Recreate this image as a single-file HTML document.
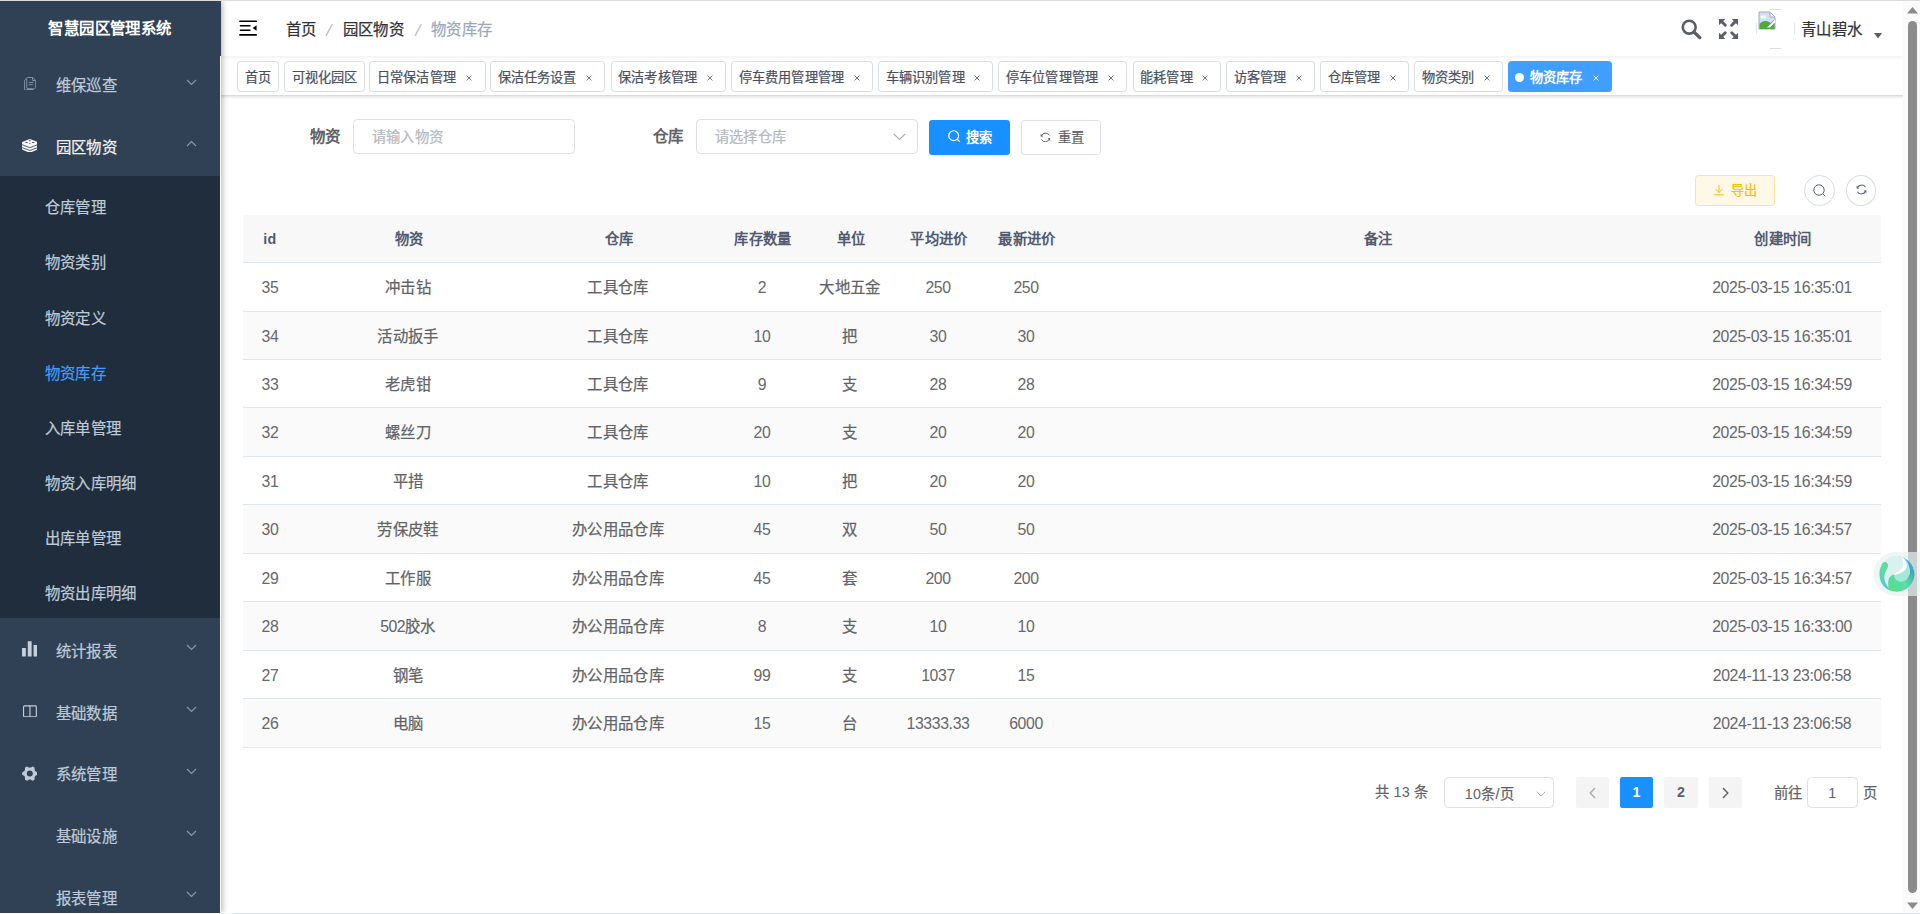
<!DOCTYPE html>
<html lang="zh-CN"><head><meta charset="utf-8"><title>物资库存</title>
<style>
*{box-sizing:border-box;margin:0;padding:0}
html,body{width:1920px;height:914px;overflow:hidden;background:#fff}
body{position:relative;font-family:"Liberation Sans",sans-serif;color:#303133;-webkit-font-smoothing:auto;-webkit-text-stroke:.22px}
.abs{position:absolute}
#topline{position:absolute;left:0;top:0;width:1920px;height:1px;background:#dcdcdc;z-index:50}
#botline{position:absolute;left:0;top:913px;width:1920px;height:1px;background:linear-gradient(90deg,#f2fafb 0,#f2fafb 228px,#d3e7ef 236px,#d3e7ef 100%);z-index:50}
#sidebar{position:absolute;left:0;top:1px;width:220px;height:912px;background:#304156;z-index:20;box-shadow:2px 0 6px rgba(0,21,41,.35);overflow:visible}
#subbg{position:absolute;left:0;top:175px;width:220px;height:442px;background:#1f2d3d}
#title{letter-spacing:.4px;position:absolute;left:0;top:0;width:220px;height:55px;line-height:55px;text-align:center;color:#fff;font-weight:bold;font-size:15.4px;background:#304156}
.mi{letter-spacing:.4px;position:absolute;left:0;width:220px;height:61.6px;line-height:61.6px;color:#bfcbd9;font-size:15.4px;white-space:nowrap}
.mi span{position:absolute;left:55.5px;top:2.7px}
.mi svg.ic{position:absolute;left:22px;}
.mi svg.ar{position:absolute;left:186px;top:26px}
.si{letter-spacing:.4px;position:absolute;left:0;width:220px;height:55px;line-height:55px;color:#bfcbd9;font-size:15.4px;white-space:nowrap}
.si span{position:absolute;left:44.5px;top:1.8px}
#navbar{position:absolute;left:220px;top:1px;width:1684px;height:55px;background:#fff;box-shadow:0 1px 4px rgba(0,21,41,.08);z-index:10}
#tags{position:absolute;left:220px;top:56px;width:1684px;height:39.5px;background:#fff;border-bottom:1px solid #d8dce5;box-shadow:0 1px 3px 0 rgba(0,0,0,.12),0 0 3px 0 rgba(0,0,0,.04);z-index:9}
.tag{letter-spacing:.2px;position:absolute;top:5px;height:30.5px;line-height:32.5px;border:1px solid #d8dce5;border-radius:3.3px;background:#fff;color:#495060;font-size:13.2px;padding:0 6.5px;white-space:nowrap}
.tag svg{position:absolute;right:12.2px;top:13.1px}
.tag.on{background:#409eff;border-color:#409eff;color:#fff;font-weight:bold}
.tag.on:before{content:"";display:inline-block;width:9px;height:9px;border-radius:50%;background:#fff;margin-right:6px;margin-left:-1px;position:relative;top:-0.3px}
.bc{letter-spacing:.4px;position:absolute;top:0;height:55px;line-height:57px;font-size:15.4px;color:#303133;white-space:nowrap}
.lbl{letter-spacing:.4px;position:absolute;font-size:15.4px;font-weight:bold;color:#606266;line-height:35px;height:35px;white-space:nowrap}
.inp{letter-spacing:.3px;position:absolute;top:119px;height:35px;border:1px solid #dcdfe6;border-radius:4.4px;background:#fff;font-size:14.3px;color:#b4b8c0;line-height:34px;padding-left:17.5px;white-space:nowrap}
.btn{letter-spacing:.2px;position:absolute;border-radius:3.3px;font-size:13.2px;white-space:nowrap}
.th{letter-spacing:.3px;position:absolute;top:0;height:47px;line-height:48px;font-size:14.3px;font-weight:bold;color:#515a6e;white-space:nowrap;transform:translateX(-50%)}
.tr{position:absolute;left:243px;width:1638px;border-bottom:1px solid #dfe6ec}
.td{position:absolute;top:0;font-size:15.4px;color:#606266;white-space:nowrap;transform:translateX(-50%);letter-spacing:.4px}
.td.n{color:#66686c;letter-spacing:-.37px;font-size:15.8px;top:.9px;-webkit-text-stroke:0}
.td b{font-weight:normal;letter-spacing:-.5px;font-size:15.8px;-webkit-text-stroke:0}
.td.c{top:.9px}
.pg{letter-spacing:.3px;position:absolute;top:777px;height:31px;line-height:31px;font-size:14.3px;color:#606266;white-space:nowrap}
#title,.lbl,.th,.tag.on,.pb,.nb,.pg i{-webkit-text-stroke:0;font-style:normal}
.pb{position:absolute;top:777px;height:31px;width:33px;border-radius:2.2px;background:#f4f4f5;text-align:center;line-height:31px;font-size:14.3px;font-weight:bold;color:#606266}
</style></head>
<body>
<div id="topline"></div><div id="botline"></div>
<div id="sidebar">
<div id="subbg"></div>
<div class="mi" style="top:51.8px;"><svg class="ic" style="top:24.1px;left:23.8px" width="12.2" height="13.4" viewBox="0 0 12.2 13.4"><path d="M3.3 .5 H8.7 L11.7 3.4 V10.6 L9.2 12.9 H1.2 Q.45 12.9 .45 12.1 V3.3 Z M2.7 2 V11.2 M8.6 .6 V3.5 H11.6 M4.8 5.6 H9.3 M4.8 7.7 H9.3" fill="none" stroke="#8a97ab" stroke-width=".9"/><path d="M3 11.2 H9.6 L8.9 12.9 H3z" fill="#8a97ab"/></svg><span>维保巡查</span><svg class="ar" width="11" height="7" viewBox="0 0 11 7"><path d="M1 1 L5.5 5.5 L10 1" fill="none" stroke="#8a96a8" stroke-width="1.2"/></svg></div>
<div class="mi" style="top:113.4px;color:#f4f4f5;"><svg class="ic" style="top:24.3px;left:21.8px" width="15.6" height="13.8" viewBox="0 0 15.6 13.8"><path d="M.3 2.9 L7 .3 Q7.8 0 8.6 .3 L15.3 2.9 Q15.6 3.1 15.6 3.6 V10 Q15.6 10.5 15.2 10.7 L8.6 13.5 Q7.8 13.8 7 13.5 L.4 10.7 Q0 10.5 0 10 V3.6 Q0 3.1 .3 2.9Z" fill="#f6f7f9"/><path d="M-.2 5.6 L7.8 8.7 L15.8 5.6 M-.2 8.5 L7.8 11.5 L15.8 8.5" stroke="#304156" stroke-width=".85" fill="none"/><ellipse cx="4.5" cy="3.5" rx="1.35" ry=".6" fill="#304156"/><ellipse cx="11.1" cy="3.5" rx="1.35" ry=".6" fill="#304156"/><ellipse cx="7.9" cy="1.7" rx="1" ry=".5" fill="#304156"/><ellipse cx="7.7" cy="4.7" rx="1" ry=".42" fill="#304156"/></svg><span>园区物资</span><svg class="ar" width="11" height="7" viewBox="0 0 11 7"><path d="M1 6 L5.5 1.5 L10 6" fill="none" stroke="#8a96a8" stroke-width="1.2"/></svg></div>
<div class="si" style="top:177.6px;"><span>仓库管理</span></div>
<div class="si" style="top:232.7px;"><span>物资类别</span></div>
<div class="si" style="top:287.8px;"><span>物资定义</span></div>
<div class="si" style="top:342.9px;color:#409eff;"><span>物资库存</span></div>
<div class="si" style="top:398.0px;"><span>入库单管理</span></div>
<div class="si" style="top:453.1px;"><span>物资入库明细</span></div>
<div class="si" style="top:508.2px;"><span>出库单管理</span></div>
<div class="si" style="top:563.3px;"><span>物资出库明细</span></div>
<div class="mi" style="top:617px;"><svg class="ic" style="top:22.8px;left:22px" width="15.4" height="15.8" viewBox="0 0 16 16"><path d="M0 7 h4 v9 h-4z M6 0 h4 v16 h-4z M12 4 h4 v12 h-4z" fill="#c6cfdb"/></svg><span>统计报表</span><svg class="ar" width="11" height="7" viewBox="0 0 11 7"><path d="M1 1 L5.5 5.5 L10 1" fill="none" stroke="#8a96a8" stroke-width="1.2"/></svg></div>
<div class="mi" style="top:678.85px;"><svg class="ic" style="top:24.8px;left:22.8px" width="13.9" height="12.6" viewBox="0 0 15 13"><rect x=".6" y=".6" width="13.8" height="11.8" rx="1" fill="none" stroke="#c6cfdb" stroke-width="1.2"/><path d="M7.5 .6 V12.4" stroke="#c6cfdb" stroke-width="1.2"/></svg><span>基础数据</span><svg class="ar" width="11" height="7" viewBox="0 0 11 7"><path d="M1 1 L5.5 5.5 L10 1" fill="none" stroke="#8a96a8" stroke-width="1.2"/></svg></div>
<div class="mi" style="top:740.7px;"><svg class="ic" style="top:24.2px;left:21.8px" width="15.6" height="15.2" viewBox="0 0 15.6 15.2"><path d="M15.5 7.6 L15.5 8.1 L15.4 8.6 L15.0 9.0 L14.4 9.4 L13.8 9.6 L13.3 9.9 L13.2 10.3 L13.0 10.6 L12.8 10.9 L12.6 11.3 L12.6 11.8 L12.6 12.4 L12.6 13.1 L12.5 13.7 L12.1 14.0 L11.7 14.3 L11.2 14.5 L10.7 14.7 L10.2 14.5 L9.6 14.2 L9.0 13.8 L8.6 13.5 L8.2 13.6 L7.8 13.6 L7.4 13.6 L7.0 13.5 L6.6 13.8 L6.0 14.2 L5.4 14.5 L4.9 14.7 L4.4 14.5 L4.0 14.3 L3.5 14.0 L3.1 13.7 L3.0 13.1 L3.0 12.4 L3.0 11.8 L3.0 11.3 L2.8 10.9 L2.6 10.6 L2.4 10.3 L2.3 9.9 L1.8 9.6 L1.2 9.4 L0.6 9.0 L0.2 8.6 L0.1 8.1 L0.1 7.6 L0.1 7.1 L0.2 6.6 L0.6 6.2 L1.2 5.8 L1.8 5.6 L2.3 5.3 L2.4 4.9 L2.6 4.6 L2.8 4.3 L3.0 3.9 L3.0 3.4 L3.0 2.8 L3.0 2.1 L3.1 1.5 L3.5 1.2 L3.9 0.9 L4.4 0.7 L4.9 0.5 L5.4 0.7 L6.0 1.0 L6.6 1.4 L7.0 1.7 L7.4 1.6 L7.8 1.6 L8.2 1.6 L8.6 1.7 L9.0 1.4 L9.6 1.0 L10.2 0.7 L10.7 0.5 L11.2 0.7 L11.7 0.9 L12.1 1.2 L12.5 1.5 L12.6 2.1 L12.6 2.8 L12.6 3.4 L12.6 3.9 L12.8 4.3 L13.0 4.6 L13.2 4.9 L13.3 5.3 L13.8 5.6 L14.4 5.8 L15.0 6.2 L15.4 6.6 L15.5 7.1Z M7.8 4.6 A3 3 0 1 0 7.8 10.6 A3 3 0 1 0 7.8 4.6Z" fill="#bfcbd9" fill-rule="evenodd"/></svg><span>系统管理</span><svg class="ar" width="11" height="7" viewBox="0 0 11 7"><path d="M1 1 L5.5 5.5 L10 1" fill="none" stroke="#8a96a8" stroke-width="1.2"/></svg></div>
<div class="mi" style="top:802.55px;"><span>基础设施</span><svg class="ar" width="11" height="7" viewBox="0 0 11 7"><path d="M1 1 L5.5 5.5 L10 1" fill="none" stroke="#8a96a8" stroke-width="1.2"/></svg></div>
<div class="mi" style="top:864.4px;"><span>报表管理</span><svg class="ar" width="11" height="7" viewBox="0 0 11 7"><path d="M1 1 L5.5 5.5 L10 1" fill="none" stroke="#8a96a8" stroke-width="1.2"/></svg></div>
<div id="title">智慧园区管理系统</div>
</div>
<div class="abs" style="left:220px;top:1px;width:1px;height:55px;background:#304156;z-index:21"></div>
<div class="abs" style="left:220px;top:56px;width:1px;height:857px;background:#fff;z-index:21"></div>
<div id="navbar">
<svg class="abs" style="left:19px;top:19px" width="18" height="16" viewBox="0 0 18 16"><path d="M.9 .4 h16.4 a.8 .8 0 0 1 0 1.6 h-16.4 a.8 .8 0 0 1 0 -1.6z M1.4 5 h9.6 a.7 .7 0 0 1 0 1.4 h-9.6 a.7 .7 0 0 1 0 -1.4z M1.4 9.5 h9.6 a.7 .7 0 0 1 0 1.4 h-9.6 a.7 .7 0 0 1 0 -1.4z M.9 14.1 h16.4 a.8 .8 0 0 1 0 1.6 h-16.4 a.8 .8 0 0 1 0 -1.6z M17.6 5.2 v5.6 l-3.9 -2.7z" fill="#000"/></svg>
<div class="bc" style="left:65.5px">首页</div>
<svg class="abs" style="left:100px;top:20px" width="20" height="20" viewBox="0 0 20 20"><path d="M6 14.9 L12.3 3.2" stroke="#c0c4cc" stroke-width="1.5"/></svg>
<div class="bc" style="left:122.5px">园区物资</div>
<svg class="abs" style="left:188.6px;top:20px" width="20" height="20" viewBox="0 0 20 20"><path d="M6 14.9 L12.3 3.2" stroke="#c0c4cc" stroke-width="1.5"/></svg>
<div class="bc" style="left:211px;color:#97a8be">物资库存</div>
<svg class="abs" style="left:1460.5px;top:17.5px" width="21" height="21" viewBox="0 0 21 21"><circle cx="8.2" cy="8.2" r="6.45" fill="none" stroke="#5a5e66" stroke-width="2.6"/><path d="M13.2 13.2 L18.8 18.6" stroke="#5a5e66" stroke-width="3.3" stroke-linecap="round"/></svg>
<svg class="abs" style="left:1499px;top:17.8px" width="19" height="20" viewBox="0 0 19 20"><g fill="#5a5e66" stroke="#5a5e66" stroke-width="2.9" stroke-linecap="round"><path d="M0 0 h6.3 L0 6.3z" stroke="none"/><path d="M2.5 2.5 L6.3 6.3"/><path d="M19 0 v6.3 L12.7 0z" stroke="none"/><path d="M16.5 2.5 L12.7 6.3"/><path d="M0 20 v-6.3 L6.3 20z" stroke="none"/><path d="M2.5 17.5 L6.3 13.7"/><path d="M19 20 h-6.3 L19 13.7z" stroke="none"/><path d="M16.5 17.5 L12.7 13.7"/></g></svg>
<div class="abs" style="left:1550px;top:8px;width:11px;height:1px;background:#dedede"></div><div class="abs" style="left:1550px;top:46.5px;width:11px;height:1px;background:#dedede"></div><div class="abs" style="left:1536px;top:22px;width:1px;height:11px;background:#e4e4e4"></div><div class="abs" style="left:1573.6px;top:22px;width:1px;height:11px;background:#e4e4e4"></div>
<svg class="abs" style="left:1537.5px;top:10px" width="19" height="19" viewBox="0 0 19 19"><path d="M1 1 h11 l5 5 v12 h-16z" fill="#cfe0f7" stroke="#a3acb6" stroke-width="1"/><path d="M12 1 v5 h5z" fill="#fff" stroke="#a3acb6" stroke-width="1"/><path d="M1.5 18 v-5 c3 -3.5 7 -4 11 -1 l4 -3.5 v9.5z" fill="#4fa83d"/><path d="M9 16.5 L17 8.5 v3 L12 16.5z" fill="#fff"/><ellipse cx="5.5" cy="6" rx="3" ry="1.4" fill="#fff"/></svg>
<div class="bc" style="left:1581px;line-height:58px;color:#303133">青山碧水</div>
<svg class="abs" style="left:1653.5px;top:32px" width="8" height="6" viewBox="0 0 8 6"><path d="M0 0 h8 l-4 5.5z" fill="#5a5e66"/></svg>
</div>
<div id="tags">
<div class="tag" style="left:17.3px;width:41.4px">首页</div>
<div class="tag" style="left:64.2px;width:81.0px">可视化园区</div>
<div class="tag" style="left:149.3px;width:116.3px">日常保洁管理<svg width="6" height="6" viewBox="0 0 6 6"><path d="M.6 .6 L5.4 5.4 M5.4 .6 L.6 5.4" stroke="#5f6672" stroke-width=".9" fill="none"/></svg></div>
<div class="tag" style="left:270.0px;width:115.2px">保洁任务设置<svg width="6" height="6" viewBox="0 0 6 6"><path d="M.6 .6 L5.4 5.4 M5.4 .6 L.6 5.4" stroke="#5f6672" stroke-width=".9" fill="none"/></svg></div>
<div class="tag" style="left:390.5px;width:115.2px">保洁考核管理<svg width="6" height="6" viewBox="0 0 6 6"><path d="M.6 .6 L5.4 5.4 M5.4 .6 L.6 5.4" stroke="#5f6672" stroke-width=".9" fill="none"/></svg></div>
<div class="tag" style="left:511.2px;width:141.6px">停车费用管理管理<svg width="6" height="6" viewBox="0 0 6 6"><path d="M.6 .6 L5.4 5.4 M5.4 .6 L.6 5.4" stroke="#5f6672" stroke-width=".9" fill="none"/></svg></div>
<div class="tag" style="left:658.2px;width:115.2px">车辆识别管理<svg width="6" height="6" viewBox="0 0 6 6"><path d="M.6 .6 L5.4 5.4 M5.4 .6 L.6 5.4" stroke="#5f6672" stroke-width=".9" fill="none"/></svg></div>
<div class="tag" style="left:778.3px;width:128.4px">停车位管理管理<svg width="6" height="6" viewBox="0 0 6 6"><path d="M.6 .6 L5.4 5.4 M5.4 .6 L.6 5.4" stroke="#5f6672" stroke-width=".9" fill="none"/></svg></div>
<div class="tag" style="left:912.5px;width:88.8px">能耗管理<svg width="6" height="6" viewBox="0 0 6 6"><path d="M.6 .6 L5.4 5.4 M5.4 .6 L.6 5.4" stroke="#5f6672" stroke-width=".9" fill="none"/></svg></div>
<div class="tag" style="left:1006.3px;width:88.8px">访客管理<svg width="6" height="6" viewBox="0 0 6 6"><path d="M.6 .6 L5.4 5.4 M5.4 .6 L.6 5.4" stroke="#5f6672" stroke-width=".9" fill="none"/></svg></div>
<div class="tag" style="left:1100.4px;width:88.8px">仓库管理<svg width="6" height="6" viewBox="0 0 6 6"><path d="M.6 .6 L5.4 5.4 M5.4 .6 L.6 5.4" stroke="#5f6672" stroke-width=".9" fill="none"/></svg></div>
<div class="tag" style="left:1194.2px;width:88.8px">物资类别<svg width="6" height="6" viewBox="0 0 6 6"><path d="M.6 .6 L5.4 5.4 M5.4 .6 L.6 5.4" stroke="#5f6672" stroke-width=".9" fill="none"/></svg></div>
<div class="tag on" style="left:1288.0px;width:104.0px">物资库存<svg width="6" height="6" viewBox="0 0 6 6"><path d="M.6 .6 L5.4 5.4 M5.4 .6 L.6 5.4" stroke="#fff" stroke-width=".9" fill="none"/></svg></div>
</div>
<div class="lbl" style="left:309.5px;top:119px">物资</div>
<div class="inp" style="left:353.3px;width:221.4px">请输入物资</div>
<div class="lbl" style="left:652.8px;top:119px">仓库</div>
<div class="inp" style="left:696.2px;width:221.5px">请选择仓库<svg class="abs" style="left:196px;top:12.5px" width="13" height="8" viewBox="0 0 13 8"><path d="M.8 .8 L6.5 6.5 L12.2 .8" fill="none" stroke="#a8abb2" stroke-width="1.2"/></svg></div>
<div class="btn" style="left:929px;top:120px;width:81px;height:34.75px;background:#1890ff;color:#fff;line-height:34.75px"><svg class="abs" style="left:18.5px;top:10.3px" width="12.3" height="12.3" viewBox="0 0 13 13"><circle cx="6" cy="6" r="5.2" fill="none" stroke="#fff" stroke-width="1.3"/><path d="M9.8 9.8 L12.2 12.2" stroke="#fff" stroke-width="1.3"/></svg><span class="abs nb" style="left:36.5px;top:.8px;font-weight:bold">搜索</span></div>
<div class="btn" style="left:1021.25px;top:120px;width:79.7px;height:34.75px;background:#fff;border:1px solid #dcdfe6;color:#606266;line-height:32.75px"><svg class="abs" style="left:17.6px;top:10.6px;transform:scaleX(-1)" width="10.8" height="10.8" viewBox="0 0 12 12"><path d="M10.6 4.6 A5 5 0 0 0 1.6 3.6 M1.4 7.4 A5 5 0 0 0 10.4 8.4" fill="none" stroke="#606266" stroke-width="1.1"/><path d="M11.3 2 v3 h-3z M.7 10 v-3 h3z" fill="#606266"/></svg><span class="abs" style="left:35.5px;top:.8px">重置</span></div>
<div class="btn" style="left:1695px;top:175px;width:80px;height:31px;background:#fff8e6;border:1px solid #ffe399;color:#ffba00;line-height:29px"><svg class="abs" style="left:17.7px;top:9px" width="10" height="11" viewBox="0 0 11 12"><path d="M5.5 0 V8 M1.8 4.5 L5.5 8.2 L9.2 4.5 M.3 10.8 H10.7" fill="none" stroke="#ffba00" stroke-width="1.1"/></svg><span class="abs" style="left:35px;top:0">导出</span></div>
<div class="abs" style="left:1804.2px;top:175px;width:30.8px;height:30.8px;border:1px solid #d8dce6;border-radius:50%"><svg class="abs" style="left:8px;top:7.7px" width="13" height="13" viewBox="0 0 13 13"><circle cx="6" cy="6" r="5.2" fill="none" stroke="#56627a" stroke-width="1"/><path d="M9.8 9.8 L12.2 12.2" stroke="#56627a" stroke-width="1"/></svg></div>
<div class="abs" style="left:1845.9px;top:175px;width:30.2px;height:30.8px;border:1px solid #d8dce6;border-radius:50%"><svg class="abs" style="left:8.9px;top:8.2px;transform:scaleX(-1)" width="11" height="11" viewBox="0 0 12 12"><path d="M10.6 4.6 A5 5 0 0 0 1.6 3.6 M1.4 7.4 A5 5 0 0 0 10.4 8.4" fill="none" stroke="#56627a" stroke-width="1.1"/><path d="M11.3 2 v3 h-3z M.7 10 v-3 h3z" fill="#56627a"/></svg></div>
<div class="tr" style="top:215px;height:48px;background:#f8f8f9">
<div class="th" style="left:27px">id</div>
<div class="th" style="left:166px">物资</div>
<div class="th" style="left:376px">仓库</div>
<div class="th" style="left:520px">库存数量</div>
<div class="th" style="left:608px">单位</div>
<div class="th" style="left:696px">平均进价</div>
<div class="th" style="left:784px">最新进价</div>
<div class="th" style="left:1135px">备注</div>
<div class="th" style="left:1540px">创建时间</div>
</div>
<div class="tr" style="top:263px;height:49px;background:#fff;line-height:48px">
<div class="td n" style="left:27px">35</div>
<div class="td c" style="left:165px">冲击钻</div>
<div class="td c" style="left:375px">工具仓库</div>
<div class="td n" style="left:519px">2</div>
<div class="td c" style="left:607px">大地五金</div>
<div class="td n" style="left:695px">250</div>
<div class="td n" style="left:783px">250</div>
<div class="td n" style="left:1539px">2025-03-15 16:35:01</div>
</div>
<div class="tr" style="top:312px;height:48px;background:#fafafa;line-height:47px">
<div class="td n" style="left:27px">34</div>
<div class="td c" style="left:165px">活动扳手</div>
<div class="td c" style="left:375px">工具仓库</div>
<div class="td n" style="left:519px">10</div>
<div class="td c" style="left:607px">把</div>
<div class="td n" style="left:695px">30</div>
<div class="td n" style="left:783px">30</div>
<div class="td n" style="left:1539px">2025-03-15 16:35:01</div>
</div>
<div class="tr" style="top:360px;height:48px;background:#fff;line-height:47px">
<div class="td n" style="left:27px">33</div>
<div class="td c" style="left:165px">老虎钳</div>
<div class="td c" style="left:375px">工具仓库</div>
<div class="td n" style="left:519px">9</div>
<div class="td c" style="left:607px">支</div>
<div class="td n" style="left:695px">28</div>
<div class="td n" style="left:783px">28</div>
<div class="td n" style="left:1539px">2025-03-15 16:34:59</div>
</div>
<div class="tr" style="top:408px;height:49px;background:#fafafa;line-height:48px">
<div class="td n" style="left:27px">32</div>
<div class="td c" style="left:165px">螺丝刀</div>
<div class="td c" style="left:375px">工具仓库</div>
<div class="td n" style="left:519px">20</div>
<div class="td c" style="left:607px">支</div>
<div class="td n" style="left:695px">20</div>
<div class="td n" style="left:783px">20</div>
<div class="td n" style="left:1539px">2025-03-15 16:34:59</div>
</div>
<div class="tr" style="top:457px;height:48px;background:#fff;line-height:47px">
<div class="td n" style="left:27px">31</div>
<div class="td c" style="left:165px">平措</div>
<div class="td c" style="left:375px">工具仓库</div>
<div class="td n" style="left:519px">10</div>
<div class="td c" style="left:607px">把</div>
<div class="td n" style="left:695px">20</div>
<div class="td n" style="left:783px">20</div>
<div class="td n" style="left:1539px">2025-03-15 16:34:59</div>
</div>
<div class="tr" style="top:505px;height:49px;background:#fafafa;line-height:48px">
<div class="td n" style="left:27px">30</div>
<div class="td c" style="left:165px">劳保皮鞋</div>
<div class="td c" style="left:375px">办公用品仓库</div>
<div class="td n" style="left:519px">45</div>
<div class="td c" style="left:607px">双</div>
<div class="td n" style="left:695px">50</div>
<div class="td n" style="left:783px">50</div>
<div class="td n" style="left:1539px">2025-03-15 16:34:57</div>
</div>
<div class="tr" style="top:554px;height:48px;background:#fff;line-height:47px">
<div class="td n" style="left:27px">29</div>
<div class="td c" style="left:165px">工作服</div>
<div class="td c" style="left:375px">办公用品仓库</div>
<div class="td n" style="left:519px">45</div>
<div class="td c" style="left:607px">套</div>
<div class="td n" style="left:695px">200</div>
<div class="td n" style="left:783px">200</div>
<div class="td n" style="left:1539px">2025-03-15 16:34:57</div>
</div>
<div class="tr" style="top:602px;height:49px;background:#fafafa;line-height:48px">
<div class="td n" style="left:27px">28</div>
<div class="td c" style="left:165px"><b>502</b>胶水</div>
<div class="td c" style="left:375px">办公用品仓库</div>
<div class="td n" style="left:519px">8</div>
<div class="td c" style="left:607px">支</div>
<div class="td n" style="left:695px">10</div>
<div class="td n" style="left:783px">10</div>
<div class="td n" style="left:1539px">2025-03-15 16:33:00</div>
</div>
<div class="tr" style="top:651px;height:48px;background:#fff;line-height:47px">
<div class="td n" style="left:27px">27</div>
<div class="td c" style="left:165px">钢笔</div>
<div class="td c" style="left:375px">办公用品仓库</div>
<div class="td n" style="left:519px">99</div>
<div class="td c" style="left:607px">支</div>
<div class="td n" style="left:695px">1037</div>
<div class="td n" style="left:783px">15</div>
<div class="td n" style="left:1539px">2024-11-13 23:06:58</div>
</div>
<div class="tr" style="top:699px;height:49px;background:#fafafa;line-height:48px">
<div class="td n" style="left:27px">26</div>
<div class="td c" style="left:165px">电脑</div>
<div class="td c" style="left:375px">办公用品仓库</div>
<div class="td n" style="left:519px">15</div>
<div class="td c" style="left:607px">台</div>
<div class="td n" style="left:695px">13333.33</div>
<div class="td n" style="left:783px">6000</div>
<div class="td n" style="left:1539px">2024-11-13 23:06:58</div>
</div>
<div class="pg" style="left:1375px">共 <i>13</i> 条</div>
<div class="pg" style="left:1444.3px;width:109.4px;border:1px solid #dcdfe6;border-radius:4.4px;line-height:31px;top:777px"><span class="abs" style="left:19.5px;top:1px"><i>10</i>条/页</span><svg class="abs" style="left:90.5px;top:13px" width="10" height="6.4" viewBox="0 0 11 7"><path d="M.8 .8 L5.5 5.5 L10.2 .8" fill="none" stroke="#a8abb2" stroke-width="1.1"/></svg></div>
<div class="pb" style="left:1576px"><svg class="abs" style="left:12.5px;top:9.5px" width="7" height="12" viewBox="0 0 7 12"><path d="M6 1 L1.2 6 L6 11" fill="none" stroke="#a8abb2" stroke-width="1.4"/></svg></div>
<div class="pb" style="left:1620px;background:#1890ff;color:#fff">1</div>
<div class="pb" style="left:1664.2px;width:33.6px">2</div>
<div class="pb" style="left:1709px"><svg class="abs" style="left:13px;top:9.5px" width="7" height="12" viewBox="0 0 7 12"><path d="M1 1 L5.8 6 L1 11" fill="none" stroke="#606266" stroke-width="1.4"/></svg></div>
<div class="pg" style="left:1774px;top:778.4px">前往</div>
<div class="pg" style="left:1807.3px;width:50.3px;border:1px solid #dcdfe6;border-radius:4.4px;text-align:center;line-height:31px;-webkit-text-stroke:0">1</div>
<div class="pg" style="left:1862.5px;top:778.4px">页</div>
<svg class="abs" style="left:1868px;top:545px;z-index:40" width="52" height="58" viewBox="0 0 52 58">
<defs>
<clipPath id="ball"><circle cx="28.6" cy="28.9" r="17.8"/></clipPath><clipPath id="rh"><rect x="31.5" y="0" width="30" height="58"/></clipPath>
<linearGradient id="gR" x1="0" y1="0" x2="0" y2="1"><stop offset="0" stop-color="#3fb4f0"/><stop offset=".5" stop-color="#35a9b8"/><stop offset="1" stop-color="#4ccaa0"/></linearGradient>
<linearGradient id="gL" x1="0" y1="0" x2="0" y2="1"><stop offset="0" stop-color="#5fdc9a"/><stop offset=".55" stop-color="#5fd2b8"/><stop offset="1" stop-color="#4cc0ea"/></linearGradient>
<linearGradient id="gB" gradientUnits="userSpaceOnUse" x1="22" y1="44" x2="46" y2="28"><stop offset="0" stop-color="#52de8a"/><stop offset=".55" stop-color="#5fdcaa"/><stop offset="1" stop-color="#37abb2"/></linearGradient>
</defs>
<path d="M52 7 H27.5 A22 22 0 0 0 27.5 51 H52 Z" fill="#e9f2ee" fill-opacity=".68"/>
<g clip-path="url(#ball)">
<circle cx="28.6" cy="28.9" r="17.8" fill="#d9f1f0"/>
<circle cx="28.6" cy="28.9" r="17.8" fill="url(#gR)" clip-path="url(#rh)"/>
<circle cx="24.4" cy="27.2" r="17.4" fill="#d9f1f0"/>
<path d="M33 11 C37.5 12.5 41.6 18.5 41.8 26.5 L41.8 32 L30 32 L30 29 C35 27 38.8 24 38.6 21 C39 16.5 36 12.5 33 11Z" fill="#a6e4f0"/>
<path d="M16.6 17.2 C11 20.5 9.5 33 15 40.5 C18 44.6 21.5 46.6 23.6 46.3 C19 41.5 15.6 36 16.4 30.5 C17 26.5 19.3 24.8 19.8 21.8 C20 19 18.6 17.2 16.6 17.2Z" fill="url(#gL)"/>
<circle cx="16.7" cy="20.3" r="3.15" fill="#5fdc96"/>
<path d="M20.2 37 C20.5 31.5 24.5 29 28 29.3 C32 29.5 36 33 41.5 29.5 L47 25 L47 48 L22 48 C20.8 45 20 41 20.2 37Z" fill="url(#gB)"/>
<path d="M26 29.6 C30 29 35 27 38 22.5 L41.4 27.5 C41.2 33 37.5 36.8 33 36.8 C29 36.8 26 33.5 26 29.6Z" fill="#a2e9d9"/>
<path d="M32.6 11 C36 12.5 39 16.5 38.6 21 C38.2 26.5 32 29.3 25.6 30 C28.5 27 33.6 25.2 34.9 21.5 C35.8 18 35 14 32.6 11Z" fill="#fff"/>
</g>
</svg>
<div class="abs" style="left:1903px;top:1px;width:17px;height:912px;background:#fafafa;z-index:30"></div>
<svg class="abs" style="left:1907px;top:6.5px;z-index:31" width="11" height="7" viewBox="0 0 11 7"><path d="M0 6.5 L5.5 0 L11 6.5z" fill="#8b8b8b"/></svg>
<div class="abs" style="left:1908px;top:21px;width:9px;height:872px;border-radius:4.5px;background:#8b8b8b;z-index:31"></div>
<svg class="abs" style="left:1907px;top:901.5px;z-index:31" width="11" height="7" viewBox="0 0 11 7"><path d="M0 .5 L5.5 7 L11 .5z" fill="#8b8b8b"/></svg>
</body></html>
